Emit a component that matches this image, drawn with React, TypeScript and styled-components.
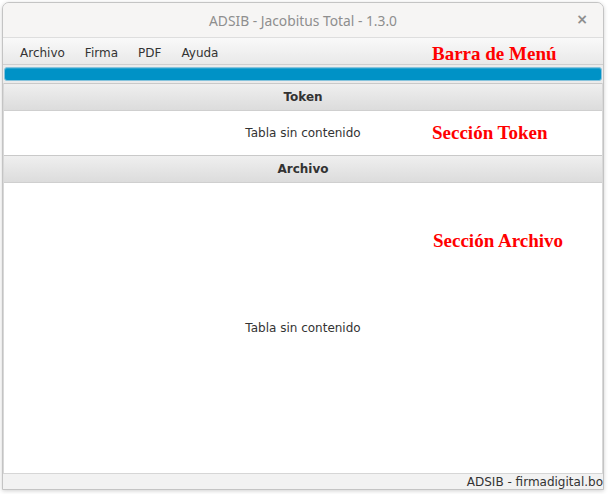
import React from "react";
import styled, { createGlobalStyle } from "styled-components";

const Global = createGlobalStyle`
  html, body { margin: 0; padding: 0; background: #ffffff; }
  body { width: 608px; height: 494px; overflow: hidden; }
`;

const Screen = styled.div`
  position: relative;
  width: 608px;
  height: 494px;
  padding: 2px 0 0 2px;
  box-sizing: border-box;
`;

const Window = styled.div`
  width: 602px;
  height: 488px;
  box-sizing: border-box;
  border: 1px solid #c4c4c4;
  border-radius: 7px 7px 0 0;
  background: #f3f3f3;
  box-shadow: 0 1px 4px rgba(0, 0, 0, 0.18);
  display: flex;
  flex-direction: column;
  overflow: hidden;
`;

const TitleBar = styled.div`
  height: 34px;
  flex: none;
  position: relative;
  display: flex;
  align-items: center;
  justify-content: center;
  background: #f6f5f4;
  border-bottom: 1px solid #dedede;
  font-family: "Noto Sans", sans-serif;
  font-size: 13.8px;
  color: #8e8e8e;
`;

const Title = styled.span``;

const CloseButton = styled.span`
  position: absolute;
  right: 15px;
  top: 8px;
  font-family: "DejaVu Sans", sans-serif;
  font-size: 14px;
  font-weight: bold;
  color: #8f8f8f;
`;

const MenuBar = styled.div`
  height: 27px;
  flex: none;
  display: flex;
  align-items: center;
  padding: 3px 0 0 8px;
  box-sizing: border-box;
  background: linear-gradient(#f9f9f9, #e9e9e9);
  border-bottom: 1px solid #cfcfcf;
`;

const MenuItem = styled.span`
  font-family: "DejaVu Sans", sans-serif;
  font-size: 12px;
  color: #333333;
  padding: 0 9px;
  margin-right: 2px;
`;

const ProgressWrap = styled.div`
  flex: none;
  padding: 2px 1px 2px 1px;
  background: #ebebeb;
`;

const ProgressBar = styled.div`
  height: 12px;
  border-radius: 3px;
  background: #0092c6;
  border: 1px solid #86c3dc;
  box-shadow: inset 0 1px 0 rgba(255, 255, 255, 0.15);
`;

const Section = styled.div<{ $grow?: boolean }>`
  display: flex;
  flex-direction: column;
  flex: ${(p) => (p.$grow ? "1 1 auto" : "none")};
  border-left: 1px solid #d8d8d8;
  border-right: 1px solid #d8d8d8;
`;

const SectionHeader = styled.div`
  height: 26px;
  flex: none;
  display: flex;
  align-items: center;
  justify-content: center;
  background: linear-gradient(#efefef, #dcdcdc);
  border-top: 1px solid #c9c9c9;
  border-bottom: 1px solid #cfcfcf;
  font-family: "DejaVu Sans", sans-serif;
  font-size: 12px;
  font-weight: bold;
  color: #333333;
`;

const SectionBody = styled.div<{ $height?: number }>`
  flex: ${(p) => (p.$height ? "none" : "1 1 auto")};
  height: ${(p) => (p.$height ? `${p.$height}px` : "auto")};
  display: flex;
  align-items: center;
  justify-content: center;
  background: #ffffff;
  font-family: "DejaVu Sans", sans-serif;
  font-size: 12px;
  color: #333333;
`;

const StatusBar = styled.div`
  height: 15px;
  flex: none;
  display: flex;
  align-items: center;
  justify-content: flex-end;
  background: #f2f2f2;
  border-top: 1px solid #d6d6d6;
  font-family: "DejaVu Sans", sans-serif;
  font-size: 12px;
  color: #333333;
  white-space: nowrap;
`;

const Note = styled.span<{ $x: number; $y: number }>`
  position: absolute;
  left: ${(p) => p.$x}px;
  top: ${(p) => p.$y}px;
  font-family: "Liberation Serif", serif;
  font-weight: bold;
  font-size: 19px;
  color: #ff0000;
  white-space: nowrap;
`;

export default function App() {
  return (
    <>
      <Global />
      <Screen>
        <Window>
          <TitleBar>
            <Title>ADSIB - Jacobitus Total - 1.3.0</Title>
            <CloseButton>×</CloseButton>
          </TitleBar>
          <MenuBar>
            <MenuItem>Archivo</MenuItem>
            <MenuItem>Firma</MenuItem>
            <MenuItem>PDF</MenuItem>
            <MenuItem>Ayuda</MenuItem>
          </MenuBar>
          <ProgressWrap>
            <ProgressBar />
          </ProgressWrap>
          <Section>
            <SectionHeader>Token</SectionHeader>
            <SectionBody $height={44}>Tabla sin contenido</SectionBody>
          </Section>
          <Section $grow>
            <SectionHeader>Archivo</SectionHeader>
            <SectionBody>Tabla sin contenido</SectionBody>
          </Section>
          <StatusBar>ADSIB - firmadigital.bo</StatusBar>
        </Window>
        <Note $x={432} $y={43}>Barra de Menú</Note>
        <Note $x={432} $y={122}>Sección Token</Note>
        <Note $x={433} $y={230}>Sección Archivo</Note>
      </Screen>
    </>
  );
}
